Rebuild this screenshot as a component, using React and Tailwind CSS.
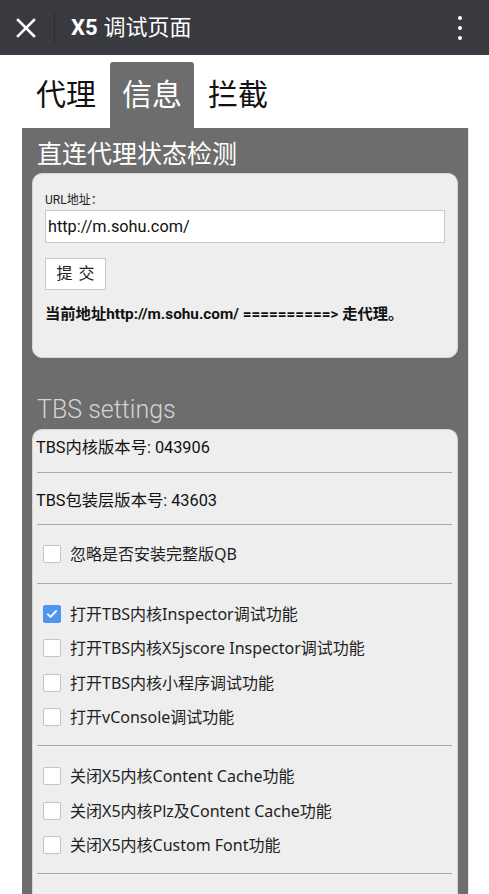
import { useState } from "react";

const font = { fontFamily: "Roboto, 'Noto Sans CJK SC', sans-serif" };
const labelFont = { fontFamily: "'Noto Sans', 'Noto Sans CJK SC', sans-serif" };

const CheckRow = ({ label, checked, onToggle }) => (
  <div className="flex items-center gap-[9px] cursor-pointer" onClick={onToggle}>
    <div
      className={`w-[18px] h-[18px] rounded-[2px] flex items-center justify-center shrink-0 ${
        checked ? "bg-[#4f94ef] border border-[#4f94ef]" : "bg-white border border-[#c4c4c4]"
      }`}
    >
      {checked && (
        <svg viewBox="0 0 24 24" className="w-[14px] h-[14px]" fill="none" stroke="white" strokeWidth={3.2} strokeLinecap="round" strokeLinejoin="round">
          <path d="M5 12.5l4.5 4.5L19 7" />
        </svg>
      )}
    </div>
    <span className="text-[16px] leading-[18px] text-[#222]" style={labelFont}>{label}</span>
  </div>
);

const Divider = () => <div className="mx-[4px] mr-[5px] h-px bg-[#a8a8a8]" />;

const App = () => {
  const [tab, setTab] = useState("信息");
  const [url, setUrl] = useState("http://m.sohu.com/");
  const [checks, setChecks] = useState({
    qb: false,
    inspector: true,
    jscore: false,
    mini: false,
    vconsole: false,
    cache: false,
    plz: false,
    font: false,
  });

  const toggle = (k) => setChecks({ ...checks, [k]: !checks[k] });

  return (
    <div className="w-[489px] h-[894px] overflow-hidden bg-white" style={font}>
      {/* title bar */}
      <div className="h-[55px] bg-[#393a3f] flex items-center">
        <button className="w-[50px] h-[55px] flex items-center justify-center pl-[1px]">
          <svg viewBox="0 0 20 20" className="w-[20px] h-[20px]" stroke="white" strokeWidth={2.6} strokeLinecap="square">
            <path d="M2 2L18 18M18 2L2 18" />
          </svg>
        </button>
        <div className="w-px h-[30px] bg-[#2b2c30] ml-[4px]" />
        <div className="ml-[16px] text-[22px] text-white flex items-center">
          <span className="font-bold">X5</span>
          <span className="ml-[6px]">调试页面</span>
        </div>
        <div className="ml-auto mr-[27px] flex flex-col gap-[6px]">
          <div className="w-[4px] h-[4px] bg-white rounded-full" />
          <div className="w-[4px] h-[4px] bg-white rounded-full" />
          <div className="w-[4px] h-[4px] bg-white rounded-full" />
        </div>
      </div>

      {/* tabs */}
      <div className="h-[73px] pt-[7px] pl-[24px] flex items-end gap-[2px]">
        {["代理", "信息", "拦截"].map((t) => (
          <button
            key={t}
            onClick={() => setTab(t)}
            className={`h-[66px] px-[12px] text-[30px] leading-[66px] rounded-t-[3px] ${
              tab === t ? "bg-[#6d6d6d] text-white" : "text-[#111]"
            }`}
          >
            {t}
          </button>
        ))}
      </div>

      {/* panel */}
      <div className="ml-[22px] w-[447px] h-[766px] bg-[#6d6d6d] border-r border-[#e6e6e6] px-[10px] pt-[12px]">
        <div className="pl-[5px] text-[25px] leading-[30px] text-white">直连代理状态检测</div>

        <div className="mt-[3px] h-[185px] rounded-[10px] bg-[#eeeeee] border border-[#d6d6d6] px-[12px] pt-[19px]">
          <div className="text-[12px] leading-[14px] text-[#222]">URL地址：</div>
          <input
            value={url}
            onChange={(e) => setUrl(e.target.value)}
            className="mt-[3px] w-[400px] h-[33px] bg-white border border-[#c8c8c8] px-[2px] text-[16.3px] text-[#111] outline-none"
          />
          <button className="mt-[15px] block w-[61px] h-[32px] bg-white border border-[#c8c8c8] text-[16px] text-[#222] tracking-[6px] pl-[6px]">
            提交
          </button>
          <div className="mt-[15px] text-[15.3px] leading-[18px] font-bold text-[#111]">
            当前地址{url} ==========&gt; 走代理。
          </div>
        </div>

        <div className="mt-[37px] pl-[5px] text-[25px] leading-[30px] font-light text-[#d4d4d4]">TBS settings</div>

        <div className="mt-[4px] h-[520px] rounded-t-[10px] bg-[#eeeeee] border border-b-0 border-[#d6d6d6]">
          <div className="px-[3px] pt-[8px] pb-[14px] text-[16.3px] leading-[20px] text-[#111]">TBS内核版本号: 043906</div>
          <Divider />
          <div className="px-[3px] pt-[18px] pb-[13px] text-[16.3px] leading-[20px] text-[#111]">TBS包装层版本号: 43603</div>
          <Divider />
          <div className="pl-[10px] pt-[20px] pb-[20px]">
            <CheckRow label="忽略是否安装完整版QB" checked={checks.qb} onToggle={() => toggle("qb")} />
          </div>
          <Divider />
          <div className="pl-[10px] pt-[21px] pb-[19px] flex flex-col gap-[16.4px]">
            <CheckRow label="打开TBS内核Inspector调试功能" checked={checks.inspector} onToggle={() => toggle("inspector")} />
            <CheckRow label="打开TBS内核X5jscore Inspector调试功能" checked={checks.jscore} onToggle={() => toggle("jscore")} />
            <CheckRow label="打开TBS内核小程序调试功能" checked={checks.mini} onToggle={() => toggle("mini")} />
            <CheckRow label="打开vConsole调试功能" checked={checks.vconsole} onToggle={() => toggle("vconsole")} />
          </div>
          <Divider />
          <div className="pl-[10px] pt-[21px] pb-[19px] flex flex-col gap-[16.4px]">
            <CheckRow label="关闭X5内核Content Cache功能" checked={checks.cache} onToggle={() => toggle("cache")} />
            <CheckRow label="关闭X5内核Plz及Content Cache功能" checked={checks.plz} onToggle={() => toggle("plz")} />
            <CheckRow label="关闭X5内核Custom Font功能" checked={checks.font} onToggle={() => toggle("font")} />
          </div>
          <Divider />
        </div>
      </div>
    </div>
  );
};

export default App;
